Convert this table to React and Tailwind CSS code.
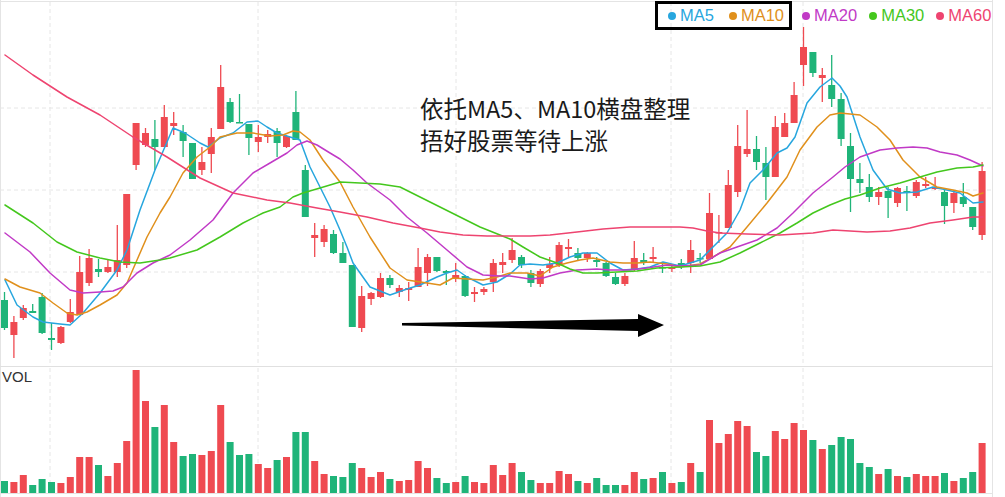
import React from "react";

const RED = "#ef4a51";
const GREEN = "#1fb479";

// [bodyTop, bodyBottom, high, low, up]
const candles = [
  [300, 328, 292, 330, 0], [322, 335, 316, 358, 1], [308, 318, 305, 320, 1], [311, 313, 304, 313, 0], [297, 333, 293, 334, 0],
  [338, 340, 323, 350, 0], [327, 343, 326, 344, 1], [312, 322, 299, 323, 1], [272, 315, 256, 315, 1], [258, 283, 249, 286, 1],
  // 10
  [269, 272, 259, 277, 0], [267, 272, 260, 273, 1], [260, 272, 225, 277, 1], [194, 265, 194, 268, 1], [123, 165, 123, 170, 1],
  [133, 145, 128, 147, 1], [139, 147, 120, 170, 0], [117, 147, 105, 147, 1], [123, 126, 112, 135, 1], [132, 141, 125, 157, 0],
  // 20
  [143, 179, 143, 179, 0], [162, 170, 147, 175, 1], [137, 154, 128, 173, 1], [87, 129, 65, 129, 1], [102, 122, 98, 123, 0],
  [122, 123, 94, 123, 0], [124, 138, 124, 155, 0], [137, 142, 125, 152, 1], [134, 137, 130, 143, 1], [131, 143, 128, 157, 0],
  // 30
  [136, 147, 135, 148, 1], [112, 140, 91, 140, 0], [170, 217, 165, 217, 0], [235, 238, 223, 257, 1], [229, 242, 225, 247, 1],
  [234, 253, 230, 254, 0], [253, 263, 242, 263, 0], [265, 327, 265, 327, 0], [296, 328, 286, 332, 1], [293, 299, 292, 305, 1],
  // 40
  [278, 297, 273, 298, 1], [278, 285, 275, 288, 0], [288, 292, 285, 297, 1], [288, 290, 282, 301, 1], [267, 287, 248, 287, 1],
  [257, 273, 254, 286, 1], [257, 271, 257, 272, 0], [271, 273, 270, 285, 0], [275, 278, 263, 282, 1], [276, 296, 275, 297, 0],
  // 50
  [292, 294, 287, 302, 1], [289, 292, 287, 295, 1], [263, 282, 259, 292, 1], [262, 265, 253, 273, 1], [250, 260, 238, 263, 1],
  [257, 265, 255, 268, 0], [273, 283, 270, 287, 0], [271, 284, 269, 287, 1], [264, 268, 257, 273, 1], [245, 265, 242, 267, 1],
  // 60
  [247, 249, 239, 257, 1], [253, 258, 248, 260, 0], [253, 258, 252, 262, 1], [260, 262, 257, 267, 0], [263, 276, 262, 277, 0],
  [277, 284, 273, 285, 0], [276, 284, 273, 286, 1], [258, 270, 241, 271, 1], [260, 262, 253, 265, 0], [257, 259, 247, 262, 1],
  // 70
  [267, 268, 263, 273, 0], [267, 269, 264, 272, 1], [263, 266, 259, 269, 0], [250, 263, 240, 273, 1], [258, 259, 253, 263, 0],
  [213, 259, 193, 259, 1], [232, 233, 215, 243, 1], [185, 228, 170, 228, 1], [146, 192, 125, 197, 1], [149, 154, 110, 157, 1],
  // 80
  [149, 162, 136, 170, 0], [163, 177, 147, 200, 0], [127, 177, 116, 177, 1], [123, 137, 113, 137, 1], [95, 123, 82, 123, 1],
  [47, 65, 27, 86, 1], [52, 73, 52, 77, 0], [75, 78, 68, 102, 1], [85, 99, 55, 107, 0], [99, 139, 93, 146, 0],
  // 90
  [146, 179, 133, 212, 0], [179, 183, 163, 193, 0], [187, 197, 174, 202, 0], [192, 197, 187, 205, 1], [191, 198, 187, 218, 0],
  [188, 203, 187, 207, 1], [191, 193, 186, 211, 0], [182, 196, 180, 198, 1], [184, 186, 177, 188, 1], [187, 189, 177, 190, 1],
  // 100
  [192, 206, 188, 224, 0], [193, 203, 190, 213, 1], [197, 204, 183, 207, 0], [207, 227, 207, 230, 0], [171, 235, 162, 240, 1],
];

const volumes = [
  481, 482, 475, 485, 479, 482, 483, 477, 457, 457,
  465, 476, 463, 441, 370, 401, 427, 405, 442, 456,
  454, 455, 451, 405, 442, 455, 454, 464, 468, 460,
  457, 432, 432, 461, 474, 476, 477, 463, 468, 477,
  472, 479, 481, 480, 461, 468, 478, 483, 482, 476,
  482, 483, 465, 475, 463, 472, 480, 483, 483, 471,
  474, 481, 483, 478, 485, 485, 485, 472, 479, 478,
  472, 483, 482, 463, 472, 420, 443, 434, 421, 426,
  452, 456, 431, 439, 423, 430, 440, 449, 445, 437,
  439, 463, 467, 474, 469, 476, 477, 474, 476, 476,
  473, 481, 478, 472, 443,
];

const maLines = [
  {
    name: "MA5",
    color: "#27a6de",
    points:
      "5,280 17,305 33,317 43,322 60,324 70,325 83,313 100,293 117,270 127,250 140,210 155,170 170,135 173,128 185,133 200,143 208,147 220,138 233,133 247,122 258,121 267,127 277,133 290,137 300,140 310,167 330,207 340,230 347,247 353,263 370,287 390,295 407,289 420,285 437,277 447,273 457,270 467,277 483,285 497,282 510,274 520,265 530,264 543,265 557,263 570,257 583,253 597,253 610,263 623,270 637,269 650,267 663,262 680,266 700,260 713,247 727,233 740,210 750,183 763,170 777,153 787,148 795,137 807,103 820,87 832,78 840,86 847,97 860,137 873,170 887,189 900,193 917,192 933,187 947,190 960,193 973,203 983,202",
  },
  {
    name: "MA10",
    color: "#e0901c",
    points:
      "5,279 20,287 40,293 53,303 67,313 77,315 87,312 100,305 117,295 127,283 137,260 147,237 160,213 170,197 183,173 197,157 210,147 220,137 237,133 253,133 270,136 283,135 293,131 300,132 310,140 323,160 340,182 353,207 370,237 390,268 407,280 427,283 440,285 453,278 467,279 483,280 497,277 510,273 527,273 540,276 553,267 567,263 580,260 593,258 610,262 623,263 637,263 650,262 667,264 680,267 700,264 713,257 730,247 747,227 767,203 787,177 800,150 817,127 830,115 840,113 860,115 877,127 890,140 903,160 920,177 937,187 953,190 967,193 973,196 983,193",
  },
  {
    name: "MA20",
    color: "#c13ac6",
    points:
      "5,233 30,252 50,273 70,290 83,293 100,292 113,291 123,287 137,273 153,263 170,255 190,240 213,220 233,193 253,173 270,163 287,153 297,145 307,141 317,145 330,153 340,159 353,170 367,183 390,200 407,217 427,233 447,250 467,267 483,275 500,276 510,276 530,279 543,278 560,273 577,270 597,269 610,270 630,270 647,268 667,265 680,266 700,265 720,253 737,247 757,240 777,228 793,213 813,193 833,177 845,167 860,157 880,150 897,148 913,147 927,148 940,152 957,155 970,160 983,166",
  },
  {
    name: "MA30",
    color: "#44c71d",
    points:
      "5,205 33,223 57,242 77,252 100,258 120,262 140,263 160,260 170,258 197,250 220,237 243,223 263,213 280,207 293,197 303,193 320,188 340,182 360,183 380,184 400,187 420,197 440,207 460,217 480,227 500,235 510,239 523,247 540,257 557,263 570,269 583,273 597,273 617,272 637,271 657,268 680,267 700,266 720,262 740,253 760,243 780,233 797,223 813,213 830,205 845,199 860,195 880,188 900,183 920,177 937,172 957,168 973,167 983,165",
  },
  {
    name: "MA60",
    color: "#ee4470",
    points:
      "5,55 33,75 67,97 100,115 133,137 167,157 200,178 233,193 267,200 290,203 317,208 340,212 367,217 393,223 420,228 440,232 463,235 487,236 510,236 530,236 550,235 577,232 603,229 630,227 657,227 680,227 693,228 707,231 720,233 747,234 780,235 813,233 833,230 850,231 867,232 890,231 910,228 930,223 953,220 973,217 983,217",
  },
];

const vGrid = [50, 258, 456, 671, 803];
const hGrid = [108, 190, 272];
const cx = (i) => 4.5 + 9.4 * i;

const LegendItem = ({ name, color }) => (
  <div className="flex items-center gap-[4px]">
    <span className="w-[8px] h-[8px] rounded-full" style={{ backgroundColor: color }} />
    <span className="text-[16.5px] leading-none" style={{ color }}>
      {name}
    </span>
  </div>
);

const App = () => {
  return (
    <div className="w-[1005px] h-[497px] bg-white flex flex-col overflow-hidden font-['Liberation_Sans','Noto_Sans_CJK_SC',sans-serif]">
      {/* main chart */}
      <div className="relative h-[367px] shrink-0">
        <svg width="1005" height="367" viewBox="0 0 1005 367" className="block">
          <line x1="0" y1="1.5" x2="993" y2="1.5" stroke="#e4e4e4" />
          <line x1="0.5" y1="0" x2="0.5" y2="367" stroke="#e4e4e4" />
          <line x1="992.5" y1="0" x2="992.5" y2="367" stroke="#e4e4e4" />
          <line x1="0" y1="366.5" x2="993" y2="366.5" stroke="#e0e0e0" />
          {hGrid.map((y) => (
            <line key={y} x1="0" y1={y} x2="992" y2={y} stroke="#e6e6e6" strokeDasharray="4 3" />
          ))}
          {vGrid.map((x) => (
            <line key={x} x1={x} y1="2" x2={x} y2="366" stroke="#e6e6e6" strokeDasharray="4 3" />
          ))}

          {candles.map(([bt, bb, hi, lo, up], i) => {
            const c = up ? RED : GREEN;
            return (
              <g key={i}>
                <line x1={cx(i)} y1={hi} x2={cx(i)} y2={lo} stroke={c} strokeWidth="1.3" />
                <rect x={cx(i) - 3.5} y={bt} width="7" height={Math.max(bb - bt, 1.5)} fill={c} />
              </g>
            );
          })}

          {maLines.map((m) => (
            <polyline
              key={m.name}
              points={m.points}
              fill="none"
              stroke={m.color}
              strokeWidth="1.5"
              strokeLinejoin="round"
              strokeLinecap="round"
            />
          ))}

          {/* arrow */}
          <polygon points="402,323 638,319 638,314 664,325 638,337 638,331 402,325.5" fill="#000" />
        </svg>

        {/* legend */}
        <div className="absolute left-[655px] top-[1px] flex items-center">
          <div className="flex items-center gap-[15px] border-[3px] border-black h-[29px] pl-[10px] pr-[5px]">
            <LegendItem name="MA5" color="#27a6de" />
            <LegendItem name="MA10" color="#e0901c" />
          </div>
          <div className="flex items-center gap-[12px] ml-[10px]">
            <LegendItem name="MA20" color="#c13ac6" />
            <LegendItem name="MA30" color="#44c71d" />
            <LegendItem name="MA60" color="#ee4470" />
          </div>
        </div>

        {/* annotation */}
        <div className="absolute left-[420px] top-[92px] text-[23.5px] leading-[32px] text-[#1a1a1a] font-['Noto_Sans_CJK_SC',sans-serif]">
          <div>依托MA5、MA10横盘整理</div>
          <div>捂好股票等待上涨</div>
        </div>
      </div>

      {/* volume */}
      <div className="relative flex-1">
        <div className="absolute left-[2px] top-[2px] text-[15px] leading-none text-[#333]">VOL</div>
        <svg width="1005" height="130" viewBox="0 367 1005 130" className="block">
          <line x1="0.5" y1="367" x2="0.5" y2="497" stroke="#e4e4e4" />
          <line x1="992.5" y1="367" x2="992.5" y2="497" stroke="#e4e4e4" />
          <line x1="0" y1="493.5" x2="993" y2="493.5" stroke="#e4e4e4" />
          {vGrid.map((x) => (
            <line key={x} x1={x} y1="368" x2={x} y2="493" stroke="#e6e6e6" strokeDasharray="4 3" />
          ))}
          {volumes.map((top, i) => (
            <rect
              key={i}
              x={cx(i) - 3.5}
              y={top}
              width="7"
              height={493 - top}
              fill={candles[i][4] ? RED : GREEN}
            />
          ))}
        </svg>
      </div>
    </div>
  );
};

export default App;
